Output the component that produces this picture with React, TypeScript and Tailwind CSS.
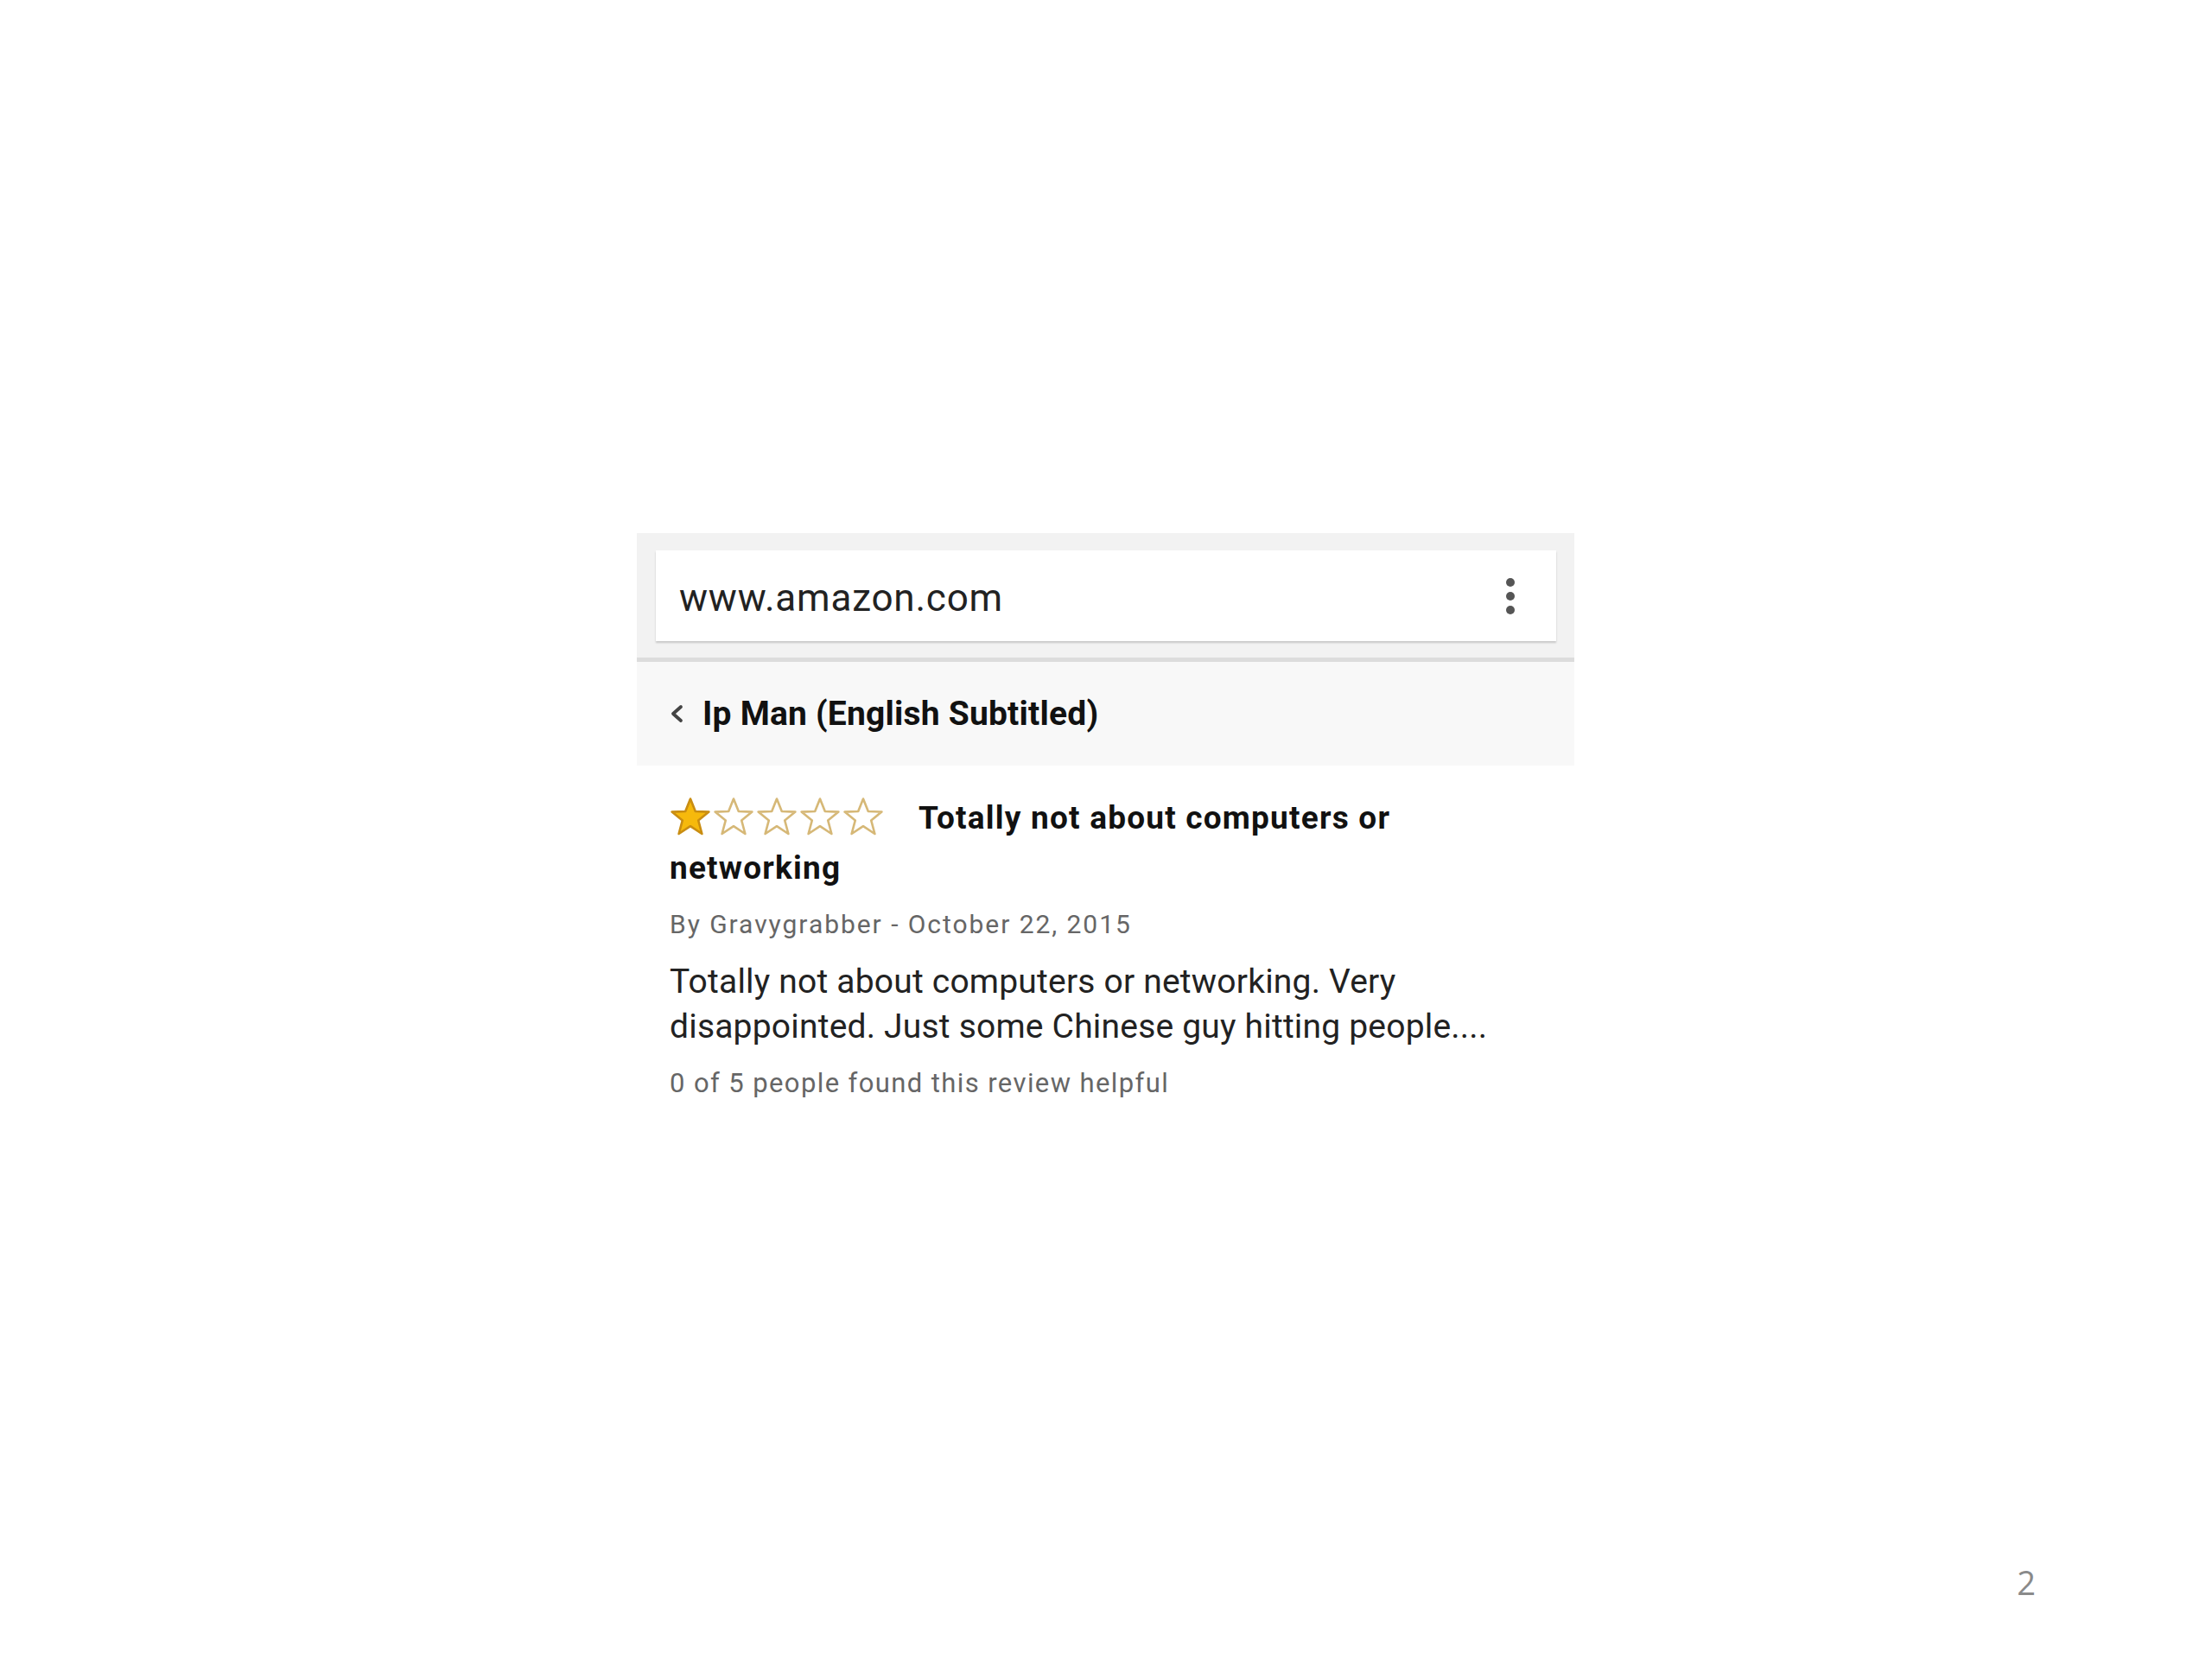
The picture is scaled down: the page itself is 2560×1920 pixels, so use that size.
import React from "react";

const roboto = { fontFamily: "Roboto, 'Noto Sans', sans-serif" };

function Star({ filled }: { filled: boolean }) {
  return (
    <svg width="48" height="46" viewBox="0 0 48 46" className="block">
      <path
        d="M24 2.5 L29.8 17 L45.4 17.6 L33.2 27.4 L37.4 43 L24 34.2 L10.6 43 L14.8 27.4 L2.6 17.6 L18.2 17 Z"
        fill={filled ? "#f6b90c" : "#ffffff"}
        stroke={filled ? "#c98d12" : "#d6b877"}
        strokeWidth="2.6"
        strokeLinejoin="round"
      />
    </svg>
  );
}

export default function App() {
  return (
    <div className="w-[2560px] h-[1920px] bg-white flex flex-col" style={roboto}>
      <div className="pl-[737px] pt-[617px]">
        <div className="w-[1085px]">
          {/* browser bar */}
          <div className="bg-[#f2f2f2] pt-[20px] pb-[19px] pl-[22px] pr-[21px]">
            <div className="h-[105px] bg-white shadow-[0_2px_2px_rgba(0,0,0,0.18)] flex items-center justify-between pl-[27px] pr-[48px]">
              <span className="text-[44px] text-[#222] pt-[4px] tracking-[0.8px]">www.amazon.com</span>
              <div className="flex flex-col gap-[6px]">
                <span className="block w-[10px] h-[10px] rounded-full bg-[#555]" />
                <span className="block w-[10px] h-[10px] rounded-full bg-[#555]" />
                <span className="block w-[10px] h-[10px] rounded-full bg-[#555]" />
              </div>
            </div>
          </div>
          <div className="h-[5px] bg-[#dcdcdc]" />

          {/* product header */}
          <div className="h-[120px] bg-[#f8f8f8] flex items-center pl-[38px] gap-[22px]">
            <svg width="16" height="22" viewBox="0 0 16 22">
              <path d="M13 3 L4 11 L13 19" fill="none" stroke="#444" strokeWidth="3.8" strokeLinecap="round" strokeLinejoin="round" />
            </svg>
            <span className="text-[39px] font-bold text-[#111] tracking-[0.2px]">Ip Man (English Subtitled)</span>
          </div>

          {/* review */}
          <div className="px-[38px] pt-[32px]">
            <p className="text-[37px] leading-[58px] font-bold text-[#111] tracking-[1.2px]">
              <span className="inline-flex gap-[2px] align-top mt-[4px] mr-[40px]">
                <Star filled />
                <Star filled={false} />
                <Star filled={false} />
                <Star filled={false} />
                <Star filled={false} />
              </span>
              Totally not about computers or networking
            </p>
            <p className="mt-[16px] text-[30px] leading-[40px] text-[#666] tracking-[1.95px]">
              By Gravygrabber - October 22, 2015
            </p>
            <p className="mt-[20px] text-[39px] leading-[52px] text-[#222] tracking-[0.2px]">
              Totally not about computers or networking. Very disappointed. Just some Chinese guy hitting people....
            </p>
            <p className="mt-[20px] text-[31px] leading-[40px] text-[#666] tracking-[1.4px]">
              0 of 5 people found this review helpful
            </p>
          </div>
        </div>
      </div>

      <div className="flex-1" />
      <div className="flex justify-end pr-[204px] pb-[60px]">
        <span className="text-[38px] text-[#8a8a8a]" style={{ fontFamily: "'Open Sans', sans-serif" }}>2</span>
      </div>
    </div>
  );
}
